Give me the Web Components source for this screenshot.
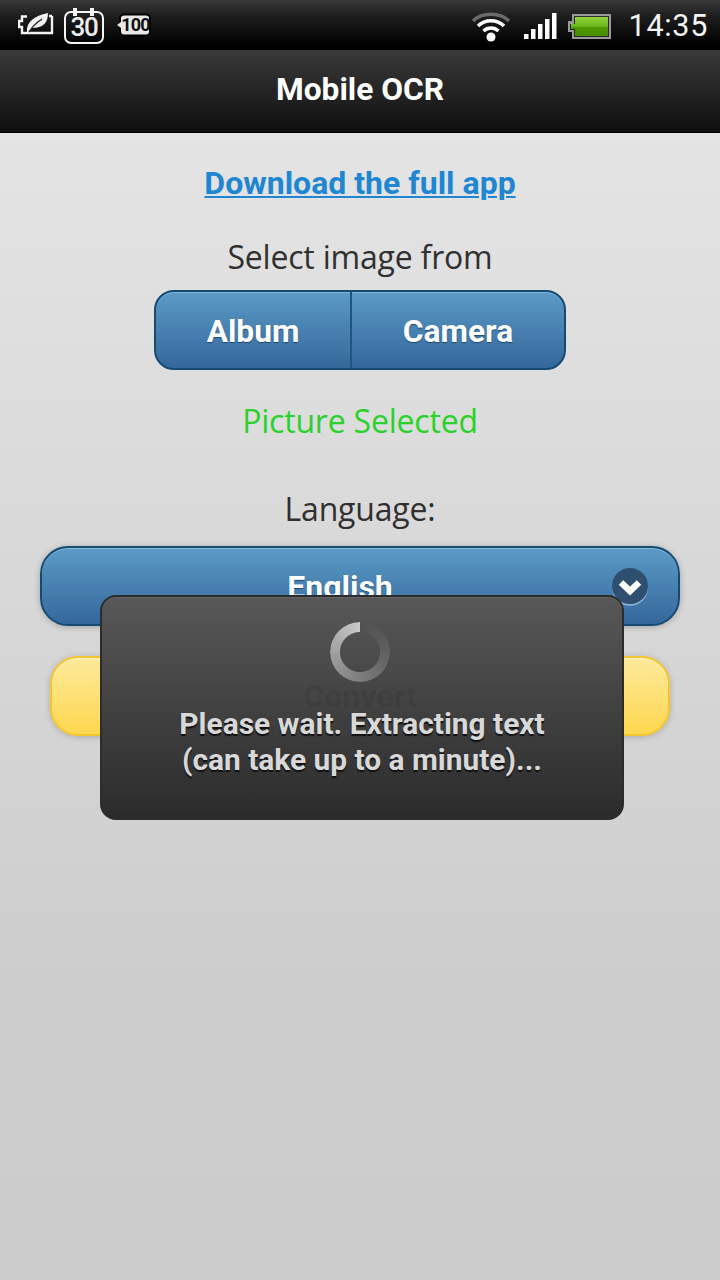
<!DOCTYPE html>
<html><head><meta charset="utf-8">
<style>
html,body{margin:0;padding:0}
body{width:720px;height:1280px;overflow:hidden;font-family:Roboto,sans-serif}
</style></head><body>
<app-page></app-page>
<script>
function def(name,html){
  customElements.define(name,class extends HTMLElement{
    constructor(){super();this.attachShadow({mode:'open'}).innerHTML=html;}
  });
}
def('status-bar',`<style>
:host{display:flex;align-items:center;height:50px;box-sizing:border-box;padding:0 12px 0 18px;background:linear-gradient(#383838,#1c1c1c 35%,#000 90%);color:#fff;font-family:Roboto,sans-serif}
svg{display:block;flex:none}
.cal{position:relative;width:40px;height:37px;margin-left:10px;flex:none}
.cal span{position:absolute;left:0;right:0;top:7px;text-align:center;font:500 26px/27px Roboto,sans-serif;letter-spacing:-1.2px;color:#eee}
.hun{position:relative;width:34px;height:24px;margin-left:13px;flex:none}
.hun span{position:absolute;left:3px;right:0;top:1px;text-align:center;font:700 18px/22px Roboto,sans-serif;letter-spacing:-.8px;color:#111}
.sp{flex:1}
.time{font:400 30.5px/36px Roboto,sans-serif;letter-spacing:.7px;margin-left:18px;color:#f4f4f4;padding-top:2px}
</style>
<svg width="36" height="26" viewBox="0 0 36 26"><path d="M9 4.500H4V9H1v6h3v6h30V4M31 4h3" fill="none" stroke="#f2f2f2" stroke-width="2.400"/><path d="M9 20C8 10 16 4 30 1c0 10-5 15-16 15l-3 4.500z" fill="#f2f2f2"/><path d="M11 20c3-5 7-9 13-13" stroke="#2a2a2a" stroke-width="1.500" fill="none"/></svg>
<div class="cal"><svg width="40" height="37" viewBox="0 0 40 37" style="position:absolute;left:0;top:0"><rect x="1" y="5" width="38" height="31" rx="6" fill="none" stroke="#f4f4f4" stroke-width="2"/><rect x="9" y="1" width="4" height="8" fill="#f4f4f4"/><rect x="26" y="1" width="4" height="8" fill="#f4f4f4"/></svg><span>30</span></div>
<div class="hun"><svg width="34" height="24" viewBox="0 0 34 24" style="position:absolute;left:0;top:0"><rect x="3" y="1.500" width="30" height="21" rx="4" fill="#e8e8e8" stroke="#000" stroke-width="2"/><path d="M0 12l4-3v6z" fill="#e8e8e8"/></svg><span>100</span></div>
<div class="sp"></div>
<svg width="40" height="32" viewBox="0 0 40 32" style="margin-top:2px"><path d="M2 11C11 2 29 2 38 11" fill="none" stroke="#6a6a6a" stroke-width="3.500"/><path d="M7 16C14 9 26 9 33 16" fill="none" stroke="#fff" stroke-width="3.500"/><path d="M12.500 21C17 17 23 17 27.500 21" fill="none" stroke="#fff" stroke-width="3.500"/><circle cx="20" cy="27" r="4.500" fill="#fff"/></svg>
<svg width="34" height="28" viewBox="0 0 34 28" style="margin-left:12px;margin-top:2px"><g fill="#fff"><rect x="1" y="22" width="4.500" height="5"/><rect x="8" y="17" width="4.500" height="10"/><rect x="15" y="12" width="4.500" height="15"/><rect x="22" y="7" width="4.500" height="20"/><rect x="29" y="1" width="4.500" height="26"/></g></svg>
<svg width="44" height="26" viewBox="0 0 44 26" style="margin-left:10px;margin-top:1px"><defs><linearGradient id="g" x1="0" y1="0" x2="0" y2="1"><stop offset="0" stop-color="#8fd33a"/><stop offset=".5" stop-color="#6bb51c"/><stop offset=".55" stop-color="#4f9a00"/><stop offset="1" stop-color="#468c00"/></linearGradient></defs><path d="M5 1h39v25H5v-7H1V8h4z" fill="#9a9a9a"/><path d="M7 3h35v21H7v-7H3v-6h4z" fill="#2b2b2b"/><path d="M8 4h33v19H8v-7H4v-5h4z" fill="url(#g)"/></svg>
<span class="time">14:35</span>`);
def('title-bar',`<style>
:host{display:flex;align-items:center;justify-content:center;height:83px;box-sizing:border-box;padding-bottom:2px;background:linear-gradient(#3a3a3a,#111 95%);border-bottom:1px solid #000;color:#fff;font:700 31.700px/36px Roboto,sans-serif}
</style><slot></slot>`);
def('ui-button',`<style>
:host{display:flex;align-items:center;justify-content:center;box-sizing:border-box;color:#fff;font:700 32px/36px Roboto,sans-serif;background:linear-gradient(#5b9ac7,#35689b);border:2px solid #144b74;box-shadow:inset 0 1px 0 rgba(255,255,255,.25);text-shadow:0 1px 1px #1c4a70}
:host([tone=yellow]){background:linear-gradient(#fee99b,#fdd850);border-color:#f5c52f;text-shadow:none;box-shadow:inset 0 1px 0 rgba(255,255,255,.5),0 1px 6px rgba(0,0,0,.2)}
:host([shadow]){box-shadow:inset 0 1px 0 rgba(255,255,255,.3),0 1px 6px rgba(0,0,0,.25)}
</style><slot></slot>`);
def('seg-control',`<style>
:host{display:flex;width:412px;height:80px;box-sizing:border-box;border:2px solid #144b74;border-radius:20px;overflow:hidden;background:linear-gradient(#5b9ac7,#35689b);box-shadow:inset 0 1px 0 rgba(255,255,255,.25);color:#fff;font:700 31.700px/36px Roboto,sans-serif;text-shadow:0 1px 1px #1c4a70}
div{display:flex;align-items:center;justify-content:center;padding-top:4px}
.a{width:194px;border-right:2px solid #1d567f}
.b{flex:1}
</style><div class="a"><slot name="a"></slot></div><div class="b"><slot name="b"></slot></div>`);
def('label-text',`<style>
:host{display:block;text-align:center;font:400 32px/38px "Open Sans","Noto Sans",sans-serif;color:#303030;letter-spacing:-.2px}
:host([tone=green]){color:#2bd12b}
</style><slot></slot>`);
def('select-box',`<style>
:host{display:block;position:relative;width:640px;height:80px}
ui-button{height:80px;border-radius:28px;padding:2px 40px 0 0;display:flex}
svg{position:absolute;left:571px;top:22px}
</style><ui-button shadow><slot></slot></ui-button>
<svg width="38" height="38" viewBox="0 0 38 38"><circle cx="19" cy="19.800" r="18" fill="#9cc0dc" opacity=".8"/><circle cx="19" cy="18" r="18" fill="#2f4f70"/><path d="M10 14.500l9 8.500 9-8.500" fill="none" stroke="#fff" stroke-width="6.500"/></svg>`);
def('wait-dialog',`<style>
:host{display:flex;flex-direction:column;align-items:center;position:absolute;z-index:1;left:100px;top:595px;width:524px;height:225px;box-sizing:border-box;padding-top:25px;border:2px solid #2c2c2c;border-radius:16px;background:linear-gradient(#585858,#2b2b2b);box-shadow:inset 0 1px 0 rgba(255,255,255,.08);color:#d8d8d8;font:700 29.900px/36px Roboto,sans-serif;text-align:center;text-shadow:0 2px 1px #111}
.sp{width:60px;height:60px;margin-right:4px;border-radius:50%;background:conic-gradient(#525252 0deg,#5a5a5a 60deg,#686868 120deg,#858585 200deg,#adadad 300deg,#cacaca 360deg);-webkit-mask:radial-gradient(circle,transparent 19.500px,#000 20.500px);mask:radial-gradient(circle,transparent 19.500px,#000 20.500px)}
.t{margin-top:24px}
</style><div class="sp"></div><div class="t"><slot></slot></div>`);
def('app-page',`<style>
:host{display:block;position:relative;width:720px;height:1280px;background:#ccc;overflow:hidden}
.main{display:flex;flex-direction:column;align-items:center;height:1147px;background:linear-gradient(#e4e4e4,#cdcdcd 75%,#cccccc)}
a{font:700 32px/38px Roboto,sans-serif;color:#1f87d2;text-decoration:underline;text-decoration-thickness:2px;text-underline-offset:2px;margin-top:31px}
.sel{margin-top:36px}
seg-control{margin-top:14px}
.pic{margin-top:32px}
.lang{margin-top:50px}
select-box{margin-top:18px}
ui-button[tone]{width:620px;height:80px;margin-top:30px;border-radius:28px}
.conv{position:relative;z-index:2;color:rgba(0,0,0,.08)}
</style>
<status-bar></status-bar>
<title-bar>Mobile OCR</title-bar>
<div class="main">
<a href="#">Download the full app</a>
<label-text class="sel">Select image from</label-text>
<seg-control><span slot="a">Album</span><span slot="b">Camera</span></seg-control>
<label-text class="pic" tone="green">Picture Selected</label-text>
<label-text class="lang">Language:</label-text>
<select-box>English</select-box>
<ui-button tone="yellow"><span class="conv">Convert</span></ui-button>
</div>
<wait-dialog>Please wait. Extracting text<br>(can take up to a minute)...</wait-dialog>`);
</script>
</body></html>
